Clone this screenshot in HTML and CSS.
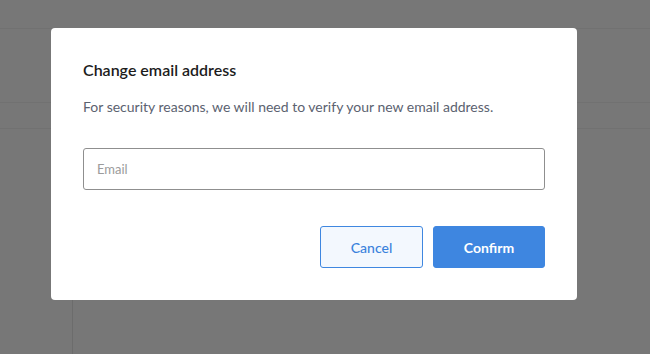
FILE: index.html
```html
<!DOCTYPE html>
<html lang="en">
<head>
<meta charset="utf-8">
<title>Change email address</title>
<link rel="stylesheet" href="styles.css">
</head>
<body>
<div class="page">
  <div class="topbar"></div>
  <div class="subbar"></div>
  <div class="tabbar"></div>
  <div class="main">
    <div class="sidebar"></div>
    <div class="content"></div>
  </div>
</div>
<div class="overlay">
  <div class="modal" role="dialog" aria-labelledby="modal-title">
    <h2 class="modal-title" id="modal-title">Change email address</h2>
    <p class="modal-text">For security reasons, we will need to verify your new email address.</p>
    <input class="modal-input" type="email" placeholder="Email">
    <div class="modal-actions">
      <button class="btn btn-secondary" type="button">Cancel</button>
      <button class="btn btn-primary" type="button">Confirm</button>
    </div>
  </div>
</div>
</body>
</html>
```
FILE: styles.css
```css
* { box-sizing: border-box; }
html, body { margin: 0; padding: 0; height: 100%; }
body {
  background: #777777;
  font-family: Lato, "Noto Sans", sans-serif;
  overflow: hidden;
}
.page {
  display: flex;
  flex-direction: column;
  height: 100%;
}
.topbar {
  height: 29px;
  border-bottom: 1px solid #717171;
}
.subbar {
  height: 74px;
  border-bottom: 1px solid #717171;
}
.tabbar {
  height: 26px;
  border-bottom: 1px solid #717171;
}
.main {
  flex: 1;
  display: flex;
}
.sidebar {
  width: 73px;
  border-right: 1px solid #6c6c6c;
}
.content { flex: 1; }

.overlay {
  position: fixed;
  inset: 0;
  padding: 28px 0 0 51px;
}
.modal {
  width: 526px;
  background: #ffffff;
  border-radius: 4px;
  padding: 31px 32px 32px;
  display: flex;
  flex-direction: column;
}
.modal-title {
  margin: 0;
  font-size: 16px;
  line-height: 22px;
  font-weight: 600;
  color: #1c1c1c;
}
.modal-text {
  margin: 16px 0 0;
  font-size: 14px;
  line-height: 20px;
  color: #5b6270;
}
.modal-input {
  margin-top: 31px;
  height: 42px;
  width: 100%;
  border: 1px solid #8f8f8f;
  border-radius: 3px;
  padding: 0 13px;
  font-family: Lato, "Noto Sans", sans-serif;
  font-size: 13px;
  color: #333;
  background: #fff;
  outline: none;
}
.modal-input::placeholder { color: #9b9b9b; }
.modal-actions {
  margin-top: 36px;
  display: flex;
  justify-content: flex-end;
  gap: 10px;
}
.btn {
  height: 42px;
  border-radius: 3px;
  font-family: Lato, "Noto Sans", sans-serif;
  font-size: 14px;
  cursor: pointer;
}
.btn-secondary {
  width: 103px;
  background: #f3f8fe;
  border: 1px solid #3f87e0;
  color: #3a82dc;
  font-weight: 500;
}
.btn-primary {
  width: 112px;
  background: #3e86e0;
  border: 1px solid #3e86e0;
  color: #ffffff;
  font-weight: 700;
}
```
